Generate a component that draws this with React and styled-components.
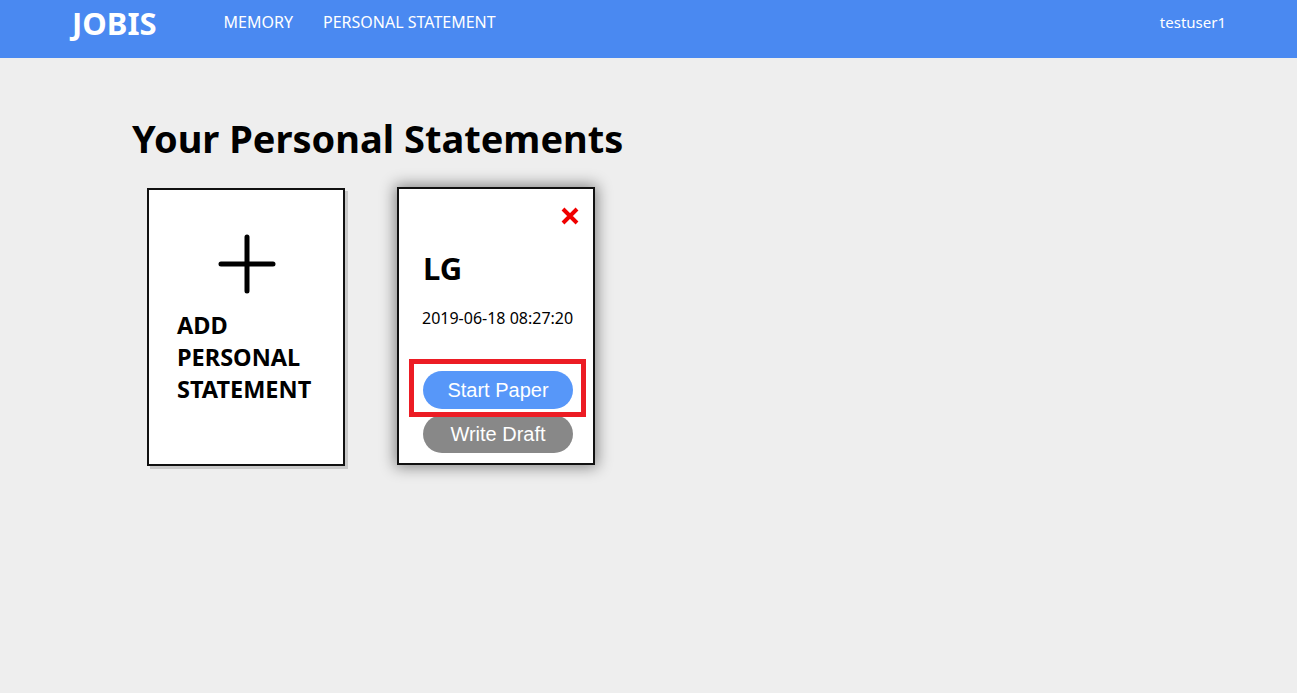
import React from "react";
import styled, { createGlobalStyle } from "styled-components";

const GlobalStyle = createGlobalStyle`
  body {
    margin: 0;
    background: #eeeeee;
    font-family: "Noto Sans", "Open Sans", sans-serif;
  }
`;

const Page = styled.div`
  min-height: 693px;
  background: #eeeeee;
`;

const NavBar = styled.div`
  display: flex;
  align-items: flex-start;
  height: 58px;
  background: #4a89f1;
  color: white;
  padding: 0 71px 0 72px;
`;

const Logo = styled.div`
  font-size: 31px;
  font-weight: bold;
  line-height: 46px;
  margin-right: 67px;
`;

const NavLink = styled.div`
  font-size: 16px;
  line-height: 44px;
  margin-right: 30px;
`;

const User = styled.div`
  margin-left: auto;
  font-size: 15px;
  line-height: 44px;
`;

const Main = styled.div`
  padding: 55px 0 0 132px;
`;

const Title = styled.h1`
  margin: 0 0 24px;
  font-size: 38px;
  line-height: 50px;
  font-weight: bold;
  color: #000;
`;

const CardRow = styled.div`
  display: flex;
  gap: 52px;
  margin-left: 15px;
  align-items: flex-start;
`;

const Card = styled.div`
  box-sizing: border-box;
  width: 198px;
  height: ${(p) => p.h}px;
  background: white;
  border: 2px solid #111;
  margin-top: ${(p) => p.top || 0}px;
  box-shadow: ${(p) =>
    p.raised ? "0 0 14px 2px rgba(0,0,0,0.45)" : "3px 3px 0 #c9c9c9"};
  position: relative;
`;

const AddCard = styled(Card)`
  display: flex;
  flex-direction: column;
  padding: 44px 0 0 28px;
`;

const PlusWrap = styled.div`
  width: 140px;
  display: flex;
  justify-content: center;
  margin: 0 0 15px;
`;

const AddText = styled.div`
  font-size: 23.5px;
  font-weight: bold;
  line-height: 32px;
  color: #000;
`;

const PaperCard = styled(Card)`
  padding: 0 0 0 24px;
`;

const Close = styled.div`
  display: flex;
  justify-content: flex-end;
  padding: 18px 14px 0 0;
  height: 18px;
`;

const Company = styled.div`
  font-size: 31px;
  font-weight: bold;
  line-height: 40px;
  margin-top: 23px;
  color: #000;
`;

const DateText = styled.div`
  font-size: 16px;
  line-height: 20px;
  margin-top: 20px;
  margin-left: -1px;
  color: #000;
`;

const Buttons = styled.div`
  margin-top: 43px;
  display: flex;
  flex-direction: column;
  gap: 6px;
  position: relative;
`;

const Button = styled.div`
  width: 150px;
  height: 38px;
  border-radius: 19px;
  background: ${(p) => p.color};
  color: white;
  font-family: "Liberation Sans", Arial, sans-serif;
  font-size: 20px;
  display: flex;
  align-items: center;
  justify-content: center;
`;

const Highlight = styled.div`
  position: absolute;
  left: -14px;
  top: -12px;
  width: 177px;
  height: 58px;
  box-sizing: border-box;
  border: 5px solid #ec1c24;
  pointer-events: none;
`;

function Plus() {
  return (
    <svg width="58" height="60" viewBox="0 0 58 60">
      <path
        d="M3 30 H55 M29 3 V57"
        stroke="#000"
        strokeWidth="5"
        strokeLinecap="round"
        fill="none"
      />
    </svg>
  );
}

function Cross() {
  return (
    <svg width="18" height="18" viewBox="0 0 18 18">
      <path
        d="M2 2 L16 16 M16 2 L2 16"
        stroke="#f00000"
        strokeWidth="4"
        fill="none"
      />
    </svg>
  );
}

export default function App() {
  return (
    <Page>
      <GlobalStyle />
      <NavBar>
        <Logo>JOBIS</Logo>
        <NavLink>MEMORY</NavLink>
        <NavLink>PERSONAL STATEMENT</NavLink>
        <User>testuser1</User>
      </NavBar>
      <Main>
        <Title>Your Personal Statements</Title>
        <CardRow>
          <AddCard h={278} top={1}>
            <PlusWrap>
              <Plus />
            </PlusWrap>
            <AddText>
              ADD
              <br />
              PERSONAL
              <br />
              STATEMENT
            </AddText>
          </AddCard>
          <PaperCard raised h={278}>
            <Close>
              <Cross />
            </Close>
            <Company>LG</Company>
            <DateText>2019-06-18 08:27:20</DateText>
            <Buttons>
              <Button color="#5797f9">Start Paper</Button>
              <Button color="#888888">Write Draft</Button>
              <Highlight />
            </Buttons>
          </PaperCard>
        </CardRow>
      </Main>
    </Page>
  );
}
